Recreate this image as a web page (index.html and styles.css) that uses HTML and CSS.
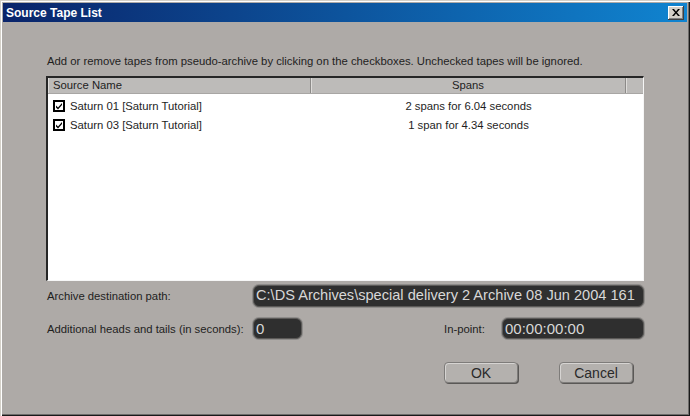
FILE: index.html
```html
<!DOCTYPE html>
<html lang="en">
<head>
  <meta charset="UTF-8">
  <title>Source Tape List</title>
  <link rel="stylesheet" href="styles.css">
</head>
<body>
  <div class="window">
    <div class="titlebar">
      <span class="title">Source Tape List</span>
      <button class="close-button">
        <svg width="8" height="7" viewBox="0 0 8 7"><path d="M0 0h2l2 2.5 2-2.5h2l-3 3.5 3 3.5h-2l-2-2.5-2 2.5h-2l3-3.5z" fill="#000"/></svg>
      </button>
    </div>

    <div class="content">
      <p class="hint">Add or remove tapes from pseudo-archive by clicking on the checkboxes. Unchecked tapes will be ignored.</p>

      <!-- tape list -->
      <div class="tape-list">
        <div class="list-head">
          <div class="head-cell col-name">Source Name</div>
          <div class="head-cell col-spans">Spans</div>
          <div class="head-cell col-rest"></div>
        </div>
        <div class="list-body">
          <div class="list-row">
            <div class="col-name">
              <svg class="check" width="12" height="12" viewBox="0 0 12 12"><rect x="1" y="1" width="10" height="10" fill="#fff" stroke="#000" stroke-width="2"/><path d="M3 5.5l2 2 4-4.5v2l-4 4.5-2-2z" fill="#000"/></svg>
              Saturn 01 [Saturn Tutorial]
            </div>
            <div class="col-spans">2 spans for 6.04 seconds</div>
          </div>
          <div class="list-row">
            <div class="col-name">
              <svg class="check" width="12" height="12" viewBox="0 0 12 12"><rect x="1" y="1" width="10" height="10" fill="#fff" stroke="#000" stroke-width="2"/><path d="M3 5.5l2 2 4-4.5v2l-4 4.5-2-2z" fill="#000"/></svg>
              Saturn 03 [Saturn Tutorial]
            </div>
            <div class="col-spans">1 span for 4.34 seconds</div>
          </div>
        </div>
      </div>

      <div class="field-row path-row">
        <label class="field-label">Archive destination path:</label>
        <div class="dark-input path-input">C:\DS Archives\special delivery 2 Archive 08 Jun 2004 161</div>
      </div>

      <div class="field-row">
        <label class="field-label">Additional heads and tails (in seconds):</label>
        <div class="dark-input short-input">0</div>
        <label class="inpoint-label">In-point:</label>
        <div class="dark-input inpoint-input">00:00:00:00</div>
      </div>

      <div class="buttons">
        <button class="dlg-button">OK</button>
        <button class="dlg-button">Cancel</button>
      </div>
    </div>
  </div>
</body>
</html>
```

FILE: styles.css
```css
body {
  margin: 0;
  width: 690px;
  height: 416px;
  overflow: hidden;
  font-family: "Liberation Sans", Arial, sans-serif;
}

.window {
  width: 690px;
  height: 416px;
  box-sizing: border-box;
  padding: 3px;
  background: #aeaaa7;
  box-shadow: inset 1px 1px #d4d0c8, inset 2px 2px #fff,
              inset -1px -1px #1a1a1a, inset -2px -2px #6e6c6a;
}

.titlebar {
  height: 19px;
  display: flex;
  align-items: center;
  justify-content: space-between;
  padding: 0 3px 0 3px;
  background: linear-gradient(to right, #0a246a, #1084d0);
}

.title {
  color: #fff;
  font-weight: bold;
  font-size: 12px;
}

.close-button {
  width: 16px;
  height: 14px;
  padding: 0;
  border: none;
  background: #d4d0c8;
  display: flex;
  align-items: center;
  justify-content: center;
  box-shadow: inset -1px -1px #404040, inset 1px 1px #fff, inset -2px -2px #808080;
}

.content {
  padding: 32px 43px 0 43px;
  font-size: 11.3px;
  color: #1e1e1e;
}

.hint {
  margin: 0;
  padding-left: 1px;
  line-height: 14px;
}

/* list */
.tape-list {
  margin-top: 8px;
  height: 205px;
  box-sizing: border-box;
  background: #fff;
  border-style: solid;
  border-width: 2px 1px 1px 2px;
  border-color: #262626 #f6f6f6 #f6f6f6 #262626;
}

.list-head {
  display: flex;
  height: 16px;
  background: #bdbbb9;
  border-bottom: 1px solid #a8a6a4;
  box-sizing: border-box;
}

.head-cell {
  box-sizing: border-box;
  line-height: 15px;
  border-right: 1px solid #8c8a88;
  box-shadow: inset 1px 0 #dedcda;
}

.col-name {
  width: 263px;
  padding-left: 5px;
  box-sizing: border-box;
}

.col-spans {
  width: 315px;
  text-align: center;
}

.col-rest {
  width: 17px;
  border-right: none;
}

.list-body {
  padding-top: 2px;
}

.list-row {
  display: flex;
  height: 19px;
  align-items: center;
}

.list-row .col-name {
  display: flex;
  align-items: center;
  gap: 5px;
  padding-left: 5px;
}

.check {
  flex: none;
}

/* fields */
.field-row {
  display: flex;
  align-items: center;
  margin-top: 11px;
  height: 21px;
}

.path-row {
  margin-top: 4px;
  height: 22px;
}

.field-label {
  width: 207px;
  padding-left: 1px;
  box-sizing: border-box;
}

.dark-input {
  height: 100%;
  box-sizing: border-box;
  background: #2f2f2f;
  border: 1px solid #5c5a58;
  border-radius: 6px;
  color: #d8d8d8;
  font-size: 15px;
  line-height: 19px;
  padding: 0 0 0 2px;
  white-space: nowrap;
  overflow: hidden;
  box-shadow: 0 0 0 1px #8e8c8a;
}

.path-input {
  width: 391px;
  font-size: 14.6px;
}

.short-input {
  width: 49px;
}

.inpoint-label {
  margin-left: 142px;
  width: 58px;
}

.inpoint-input {
  width: 142px;
}

/* buttons */
.buttons {
  display: flex;
  justify-content: flex-end;
  gap: 41px;
  margin-top: 23px;
  padding-right: 11px;
}

.dlg-button {
  width: 74px;
  height: 21px;
  padding: 0;
  font-family: "Liberation Sans", Arial, sans-serif;
  font-size: 14px;
  color: #2a2a2a;
  background: #b4b1ae;
  border: 1px solid #7e7c7a;
  border-radius: 4px;
  box-shadow: inset 1px 1px #d6d4d2, 1px 1px 0 #5a5856;
}
```
